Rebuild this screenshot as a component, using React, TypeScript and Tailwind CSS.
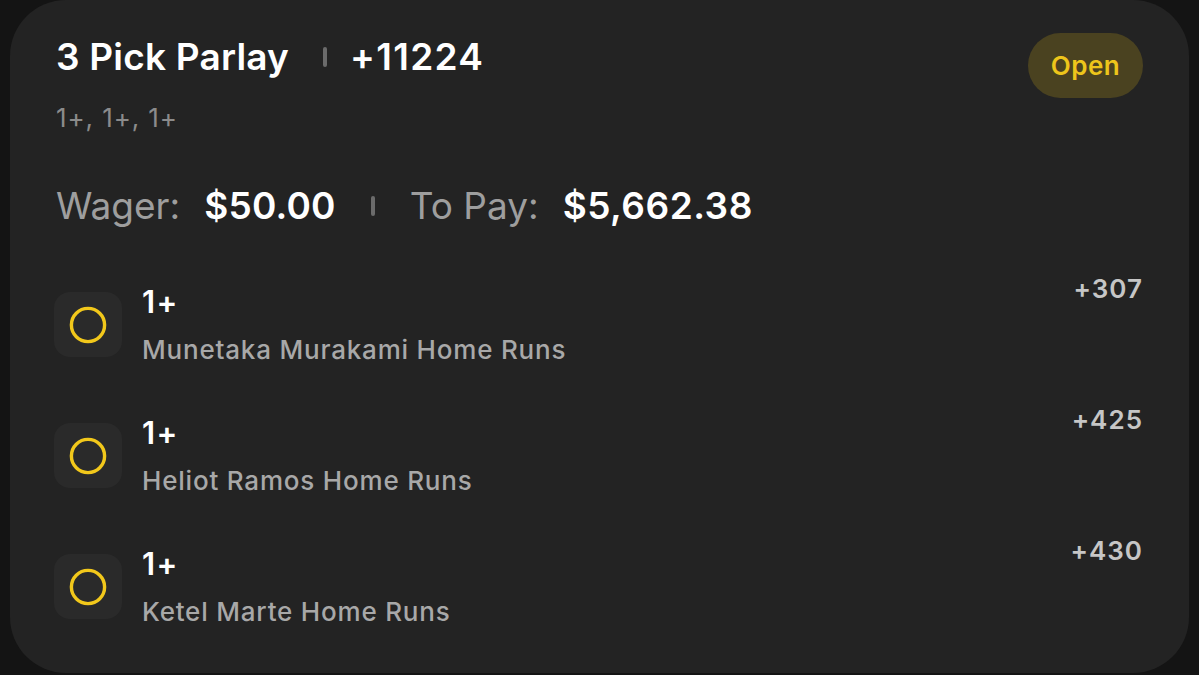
import { ReactNode } from "react";

type Leg = { line: string; player: string; odds: string };

const legs: Leg[] = [
  { line: "1+", player: "Munetaka Murakami Home Runs", odds: "+307" },
  { line: "1+", player: "Heliot Ramos Home Runs", odds: "+425" },
  { line: "1+", player: "Ketel Marte Home Runs", odds: "+430" },
];

const Divider = ({ className = "" }: { className?: string }) => (
  <span className={`inline-block w-[4px] h-[20px] rounded-full bg-[#6b6b6b] ${className}`} />
);

const PickIcon = () => (
  <div className="w-[68px] h-[65px] rounded-[16px] bg-[#2a2a2a] flex items-center justify-center flex-shrink-0">
    <svg width="40" height="40" viewBox="0 0 40 40">
      <circle cx="20" cy="20" r="16.6" fill="none" stroke="#f2c81b" strokeWidth="3.4" />
    </svg>
  </div>
);

const LegRow = ({ leg }: { leg: Leg }): ReactNode => (
  <div className="flex items-start h-[131px]">
    <div className="mt-[18px]">
      <PickIcon />
    </div>
    <div className="ml-[20px] flex-1 pt-[12px]">
      <div className="text-[31px] leading-none font-semibold text-white tracking-[1.5px]">{leg.line}</div>
      <div className="mt-[20px] text-[26px] leading-none font-medium text-[#a8a8a8] tracking-[0.8px]">
        {leg.player}
      </div>
    </div>
    <div className="mt-[2px] text-[26px] leading-none font-semibold text-[#c6c6c6] tracking-[1px]">
      {leg.odds}
    </div>
  </div>
);

export default function App() {
  return (
    <div
      className="w-[1199px] h-[675px] bg-[#141414] px-[10px] overflow-hidden"
      style={{ fontFamily: "Inter, 'Noto Sans', sans-serif" }}
    >
      <div className="h-[673px] rounded-[56px] bg-[#232323] pl-[46px] pr-[46px] pt-[33px] flex flex-col">
        {/* Header */}
        <div className="flex items-start justify-between">
          <div>
            <div className="flex items-center mt-[5px] text-[37px] leading-none font-semibold text-white">
              <span className="tracking-[0.2px]">3 Pick Parlay</span>
              <Divider className="ml-[34px] mr-[23px]" />
              <span className="tracking-[1.3px]">+11224</span>
            </div>
            <div className="mt-[30px] text-[26px] leading-none text-[#8b8b8b] tracking-[0.9px]">1+, 1+, 1+</div>
          </div>
          <div className="w-[115px] h-[65px] rounded-full bg-[#4a4220] flex items-center justify-center text-[26px] font-semibold text-[#edc51b] tracking-[0.5px]">
            Open
          </div>
        </div>

        {/* Wager */}
        <div className="mt-[56px] flex items-center text-[37px] leading-none">
          <span className="text-[#9e9e9e]">Wager:</span>
          <span className="ml-[24px] font-semibold text-white tracking-[0.2px]">$50.00</span>
          <Divider className="mx-[35px]" />
          <span className="text-[#9e9e9e]">To Pay:</span>
          <span className="ml-[24px] font-semibold text-white tracking-[0.5px]">$5,662.38</span>
        </div>

        {/* Legs */}
        <div className="mt-[50px] -ml-[2px]">
          {legs.map((leg) => (
            <LegRow key={leg.player} leg={leg} />
          ))}
        </div>
      </div>
    </div>
  );
}
